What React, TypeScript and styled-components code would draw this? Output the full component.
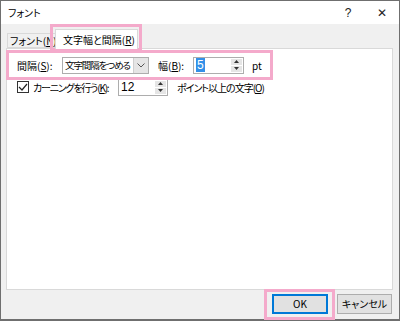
import React from "react";
import styled, { createGlobalStyle } from "styled-components";

const Global = createGlobalStyle`
  html, body { margin: 0; padding: 0; background: #fff; }
  body {
    font-family: "Noto Sans CJK JP", "Noto Sans", sans-serif;
    font-size: 10px;
    color: #000;
    font-feature-settings: "palt";
  }
  * { box-sizing: border-box; }
`;

const Window = styled.div`
  position: relative;
  width: 400px;
  height: 321px;
  border: 1px solid #6f6f6f;
  border-bottom-width: 2px;
  background: #f0f0f0;
  display: flex;
  flex-direction: column;
`;

const TitleBar = styled.div`
  height: 23px;
  background: #fff;
  display: flex;
  align-items: center;
  padding-left: 7px;
  font-size: 10px;
`;

const TitleText = styled.span`
  flex: 1;
`;

const TitleButton = styled.span`
  width: 34px;
  text-align: center;
  font-size: 12px;
  color: #222;
  font-family: "Liberation Sans", sans-serif;
`;

const Body = styled.div`
  flex: 1;
  display: flex;
  flex-direction: column;
  padding: 4px 6px 0 5px;
`;

const TabStrip = styled.div`
  height: 20px;
  display: flex;
  align-items: flex-end;
  padding-left: 1px;
`;

const Tab = styled.div<{ $active?: boolean }>`
  height: ${(p) => (p.$active ? "20px" : "15px")};
  margin-bottom: ${(p) => (p.$active ? "-1px" : "0")};
  margin-left: ${(p) => (p.$active ? "-2px" : "0")};
  padding: 0 ${(p) => (p.$active ? "7px" : "2px")};
  background: ${(p) => (p.$active ? "#fff" : "#f0f0f0")};
  border: 1px solid #d9d9d9;
  border-bottom: ${(p) => (p.$active ? "none" : "1px solid #d9d9d9")};
  display: flex;
  align-items: center;
  font-size: 10px;
  line-height: 1;
  position: relative;
  z-index: ${(p) => (p.$active ? 1 : 0)};
  white-space: nowrap;
  overflow: hidden;
  width: ${(p) => (p.$active ? "83px" : "50px")};
`;

const U = styled.span`
  text-decoration: underline;
`;

const Panel = styled.div`
  flex: 1;
  background: #fff;
  border: 1px solid #d9d9d9;
  display: flex;
  flex-direction: column;
  padding: 8px 0 0 10px;
  gap: 6px;
`;

const Row = styled.div`
  display: flex;
  align-items: center;
  height: 16px;
  font-size: 10px;
`;

const Label = styled.span<{ $w?: number; $ml?: number; $ls?: number }>`
  width: ${(p) => (p.$w ? `${p.$w}px` : "auto")};
  margin-left: ${(p) => p.$ml ?? 0}px;
  letter-spacing: ${(p) => p.$ls ?? 0}px;
  white-space: nowrap;
`;

const Select = styled.div`
  width: 87px;
  height: 17px;
  border: 1px solid #adadad;
  display: flex;
  align-items: stretch;
  background: #fff;
`;

const SelectText = styled.span`
  flex: 1;
  padding-left: 2px;
  display: flex;
  align-items: center;
  white-space: nowrap;
  overflow: hidden;
  font-size: 9.5px;
  letter-spacing: -1.1px;
`;

const SelectButton = styled.span`
  width: 15px;
  background: #e5e5e5;
  border-left: 1px solid #cfcfcf;
  display: flex;
  align-items: center;
  justify-content: center;
`;

const Spin = styled.div<{ $w: number }>`
  width: ${(p) => p.$w}px;
  height: 17px;
  border: 1px solid #adadad;
  display: flex;
  background: #fff;
`;

const SpinText = styled.span`
  flex: 1;
  padding-left: 2px;
  display: flex;
  align-items: center;
  font-family: "Liberation Sans", sans-serif;
  font-size: 12px;
`;

const Selected = styled.span`
  background: #3390e8;
  color: #fff;
  padding: 0 1px;
  line-height: 14px;
`;

const SpinButtons = styled.span`
  width: 11px;
  display: flex;
  flex-direction: column;
  margin: 1px 1px 1px 0;
  gap: 1px;
`;

const SpinHalf = styled.span`
  flex: 1;
  background: #e5e5e5;
  display: flex;
  align-items: center;
  justify-content: center;
`;

const Check = styled.span`
  width: 12px;
  height: 12px;
  border: 1px solid #333;
  display: flex;
  align-items: center;
  justify-content: center;
  margin-right: 4px;
  background: #fff;
`;

const Footer = styled.div`
  height: 29px;
  display: flex;
  align-items: center;
  justify-content: flex-end;
  gap: 9px;
  padding-right: 1px;
  padding-bottom: 2px;
`;

const Button = styled.button<{ $default?: boolean }>`
  width: ${(p) => (p.$default ? "56px" : "55px")};
  height: 20px;
  background: #e1e1e1;
  border: 1px solid ${(p) => (p.$default ? "#0078d7" : "#adadad")};
  box-shadow: ${(p) => (p.$default ? "inset 0 0 0 1px #0078d7" : "none")};
  font-family: "Noto Sans CJK JP", "Liberation Sans", sans-serif;
  font-feature-settings: "palt";
  font-size: 10px;
  padding: 0;
  color: #000;
`;

const Highlight = styled.div`
  position: absolute;
  border: 3px solid #f4aacb;
  pointer-events: none;
`;

const Chevron = () => (
  <svg width="8" height="5" viewBox="0 0 8 5">
    <path d="M0.5 0.5 L4 4 L7.5 0.5" fill="none" stroke="#555" strokeWidth="1" />
  </svg>
);

const Up = () => (
  <svg width="5" height="3" viewBox="0 0 5 3">
    <path d="M0 3 L2.5 0 L5 3 Z" fill="#333" />
  </svg>
);
const Down = () => (
  <svg width="5" height="3" viewBox="0 0 5 3">
    <path d="M0 0 L2.5 3 L5 0 Z" fill="#333" />
  </svg>
);

const SpinBox = ({ w, children }: { w: number; children: React.ReactNode }) => (
  <Spin $w={w}>
    <SpinText>{children}</SpinText>
    <SpinButtons>
      <SpinHalf>
        <Up />
      </SpinHalf>
      <SpinHalf>
        <Down />
      </SpinHalf>
    </SpinButtons>
  </Spin>
);

export default function App() {
  return (
    <>
      <Global />
      <Window>
        <TitleBar>
          <TitleText>フォント</TitleText>
          <TitleButton>?</TitleButton>
          <TitleButton>✕</TitleButton>
        </TitleBar>
        <Body>
          <TabStrip>
            <Tab>
              フォント(<U>N</U>)
            </Tab>
            <Tab $active>
              文字幅と間隔(<U>R</U>)
            </Tab>
          </TabStrip>
          <Panel>
            <Row>
              <Label $w={45}>
                間隔(<U>S</U>):
              </Label>
              <Select>
                <SelectText>文字間隔をつめる</SelectText>
                <SelectButton>
                  <Chevron />
                </SelectButton>
              </Select>
              <Label $w={35} $ml={9}>
                幅(<U>B</U>):
              </Label>
              <SpinBox w={51}>
                <Selected>5</Selected>
              </SpinBox>
              <Label $ml={8}>pt</Label>
            </Row>
            <Row>
              <Check>
                <svg width="10" height="8" viewBox="0 0 10 8">
                  <path d="M1 4 L4 7 L9 1" fill="none" stroke="#222" strokeWidth="1.2" />
                </svg>
              </Check>
              <Label $w={85} $ls={-1.2}>
                カーニングを行う(<U>K</U>):
              </Label>
              <SpinBox w={50}>12</SpinBox>
              <Label $ml={9} $ls={-1}>
                ポイント以上の文字(<U>O</U>)
              </Label>
            </Row>
          </Panel>
          <Footer>
            <Button $default>OK</Button>
            <Button>キャンセル</Button>
          </Footer>
        </Body>
        <Highlight style={{ left: 49, top: 23, width: 92, height: 27 }} />
        <Highlight style={{ left: 5, top: 49, width: 267, height: 30 }} />
        <Highlight style={{ left: 263, top: 288, width: 71, height: 31 }} />
      </Window>
    </>
  );
}
